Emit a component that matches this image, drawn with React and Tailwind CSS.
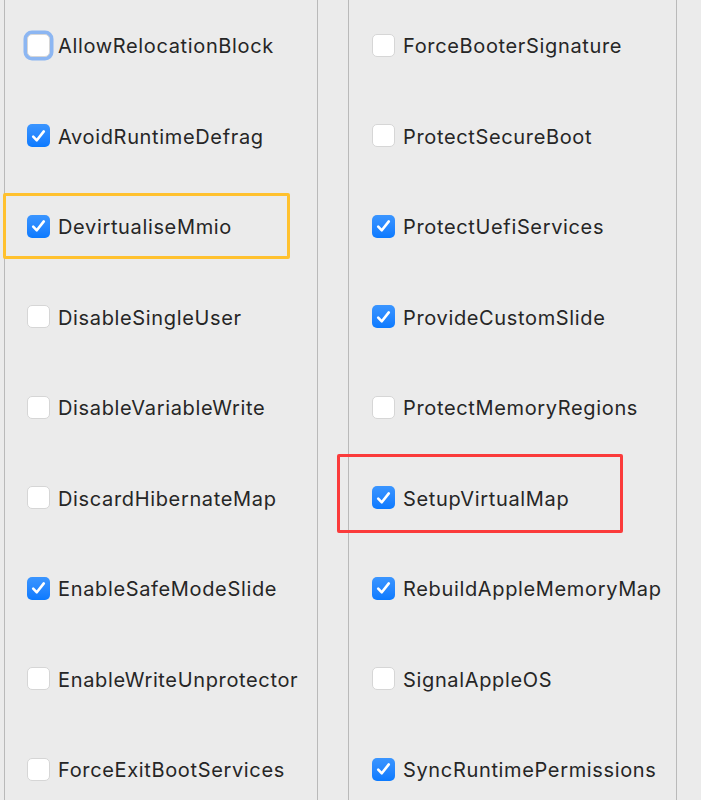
import React from 'react';

const LEFT = [
  { label: 'AllowRelocationBlock', checked: false, focus: true },
  { label: 'AvoidRuntimeDefrag', checked: true },
  { label: 'DevirtualiseMmio', checked: true, mark: 'yellow' },
  { label: 'DisableSingleUser', checked: false },
  { label: 'DisableVariableWrite', checked: false },
  { label: 'DiscardHibernateMap', checked: false },
  { label: 'EnableSafeModeSlide', checked: true },
  { label: 'EnableWriteUnprotector', checked: false },
  { label: 'ForceExitBootServices', checked: false },
];

const RIGHT = [
  { label: 'ForceBooterSignature', checked: false },
  { label: 'ProtectSecureBoot', checked: false },
  { label: 'ProtectUefiServices', checked: true },
  { label: 'ProvideCustomSlide', checked: true },
  { label: 'ProtectMemoryRegions', checked: false },
  { label: 'SetupVirtualMap', checked: true, mark: 'red' },
  { label: 'RebuildAppleMemoryMap', checked: true },
  { label: 'SignalAppleOS', checked: false },
  { label: 'SyncRuntimePermissions', checked: true },
];

const Box = ({ checked, focus }) => {
  if (checked) {
    return (
      <span className="w-[23px] h-[23px] rounded-[5px] bg-gradient-to-b from-[#3a95ff] to-[#0a7aff] flex items-center justify-center shrink-0">
        <svg width="15" height="14" viewBox="0 0 15 14" fill="none">
          <path d="M2.2 7.6 L5.8 11.3 L12.8 2.4" stroke="white" strokeWidth="2.6" strokeLinecap="round" strokeLinejoin="round" />
        </svg>
      </span>
    );
  }
  return (
    <span
      className={
        'w-[23px] h-[23px] rounded-[5px] bg-white border border-[#d6d6d6] shrink-0 ' +
        (focus ? 'ring-[3.5px] ring-[#8cb6f2] border-[#c9d9f0]' : '')
      }
    />
  );
};

const Row = ({ item }) => (
  <div className="relative flex items-center">
    {item.mark === 'yellow' && (
      <div className="absolute left-[-24px] top-[12px] w-[287px] h-[66px] border-[3px] border-[#ffc12e] rounded-[2px]" />
    )}
    {item.mark === 'red' && (
      <div className="absolute left-[-35px] top-[1px] w-[286px] h-[79px] border-[3px] border-[#fb3b3b] rounded-[2px]" />
    )}
    <Box checked={item.checked} focus={item.focus} />
    <span className="ml-[8px] mt-[2px] text-[20px] text-[#262626] tracking-[0.65px] whitespace-nowrap">{item.label}</span>
  </div>
);

export default function App() {
  return (
    <div
      className="w-[701px] h-[800px] overflow-hidden bg-[#ebebeb] flex"
      style={{ fontFamily: 'Inter, "Noto Sans", sans-serif' }}
    >
      <div className="w-[4px] shrink-0" />
      <div className="w-[314px] shrink-0 border-x-[1.5px] border-[#b9b9b9] pl-[22px] grid auto-rows-[90.5px]">
        {LEFT.map((it) => (
          <Row key={it.label} item={it} />
        ))}
      </div>
      <div className="w-[30px] shrink-0" />
      <div className="w-[329px] shrink-0 border-x-[1.5px] border-[#b9b9b9] pl-[23px] grid auto-rows-[90.5px]">
        {RIGHT.map((it) => (
          <Row key={it.label} item={it} />
        ))}
      </div>
    </div>
  );
}
